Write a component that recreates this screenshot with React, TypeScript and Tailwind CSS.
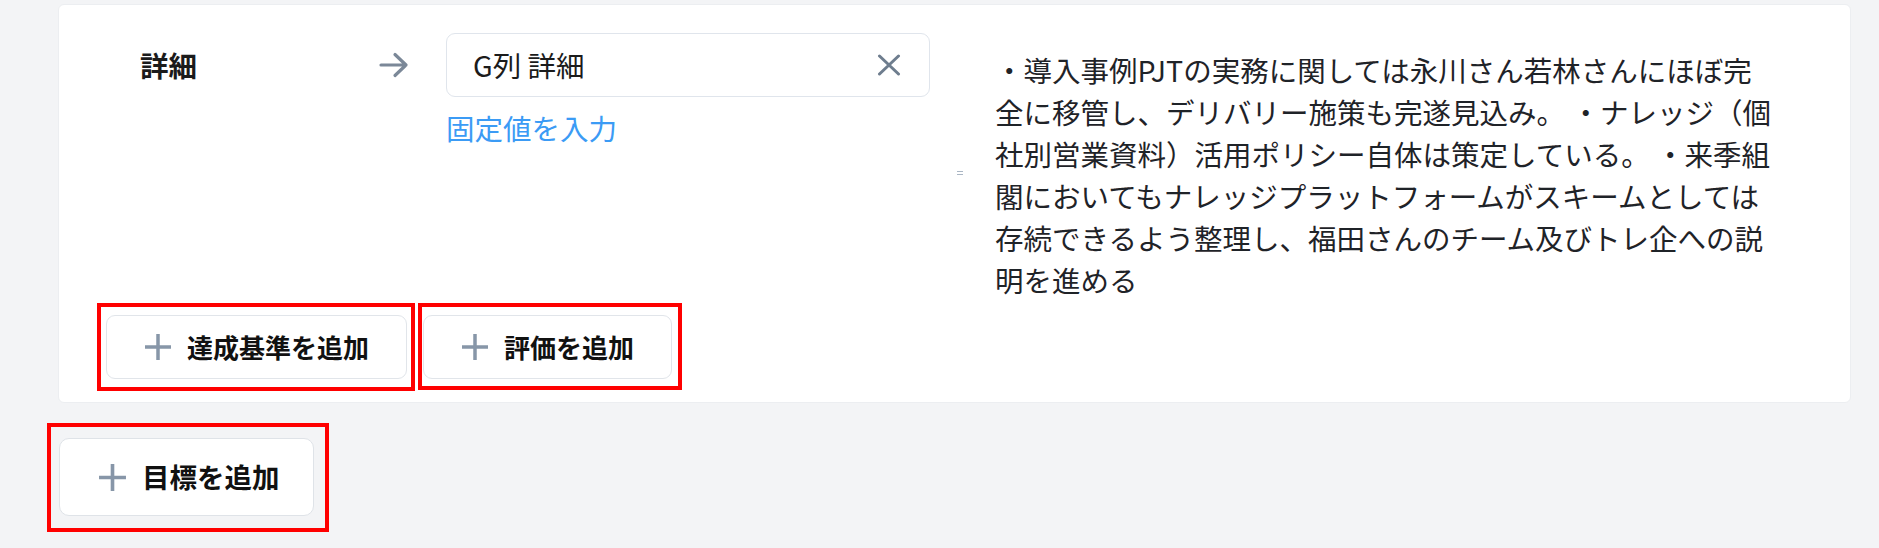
import React from "react";

const font = { fontFamily: '"Noto Sans CJK JP", "Noto Sans", sans-serif' };

// ── icons ─────────────────────────────────────────────────────────
function PlusIcon({ size = 28 }: { size?: number }) {
  return (
    <svg width={size} height={size} viewBox="0 0 28 28" fill="none" className="shrink-0">
      <path d="M14 1v26M1 14h26" stroke="#8796a8" strokeWidth="3.5" />
    </svg>
  );
}

function ArrowIcon() {
  return (
    <svg width="30" height="26" viewBox="0 0 30 26" fill="none">
      <path d="M2 13h25M16 2.5l11 10.5-11 10.5" stroke="#7b8898" strokeWidth="3.2" strokeLinecap="round" strokeLinejoin="round" />
    </svg>
  );
}

function ClearIcon() {
  return (
    <svg width="24" height="22" viewBox="0 0 24 22" fill="none">
      <path d="M2.5 2l19 18M21.5 2l-19 18" stroke="#6e7d8e" strokeWidth="3" strokeLinecap="round" />
    </svg>
  );
}

// ── AddButton ─────────────────────────────────────────────────────
interface AddButtonProps {
  label: string;
  large?: boolean;
}

function AddButton({ label, large = false }: AddButtonProps) {
  if (large) {
    return (
      <button className="flex items-center h-[78px] w-[255px] pl-[38px] gap-[15px] bg-white border border-[#dfe3e8] rounded-[10px] font-bold text-[27.5px] text-[#111] leading-none">
        <PlusIcon size={29} />
        <span>{label}</span>
      </button>
    );
  }
  return (
    <button className="flex items-center h-[64px] px-[37px] gap-[15px] bg-white border border-[#e1e5ea] rounded-[9px] font-bold text-[26px] text-[#111] leading-none">
      <PlusIcon />
      <span>{label}</span>
    </button>
  );
}

// ── Highlight (red annotation box) ────────────────────────────────
function Highlight({ children, className }: { children: React.ReactNode; className?: string }) {
  return <div className={"border-4 border-[#ff0000] " + (className ?? "")}>{children}</div>;
}

export default function App() {
  return (
    <div className="w-[1879px] h-[548px] overflow-hidden bg-[#f3f4f6] pl-[47px] pr-[28px] pt-[4px]" style={font}>
      {/* card */}
      <div className="ml-[11px] h-[399px] bg-white border border-[#eceef1] rounded-[6px] pt-[28px]">
        <div className="flex items-start h-[270px] pl-[81px]">
          <div className="w-[239px] h-[64px] flex items-center font-bold text-[28.5px] text-[#1b1b1b]">詳細</div>
          <div className="h-[64px] flex items-center w-[67px] shrink-0">
            <ArrowIcon />
          </div>
          <div className="w-[484px] shrink-0">
            <div className="h-[64px] flex items-center justify-between pl-[26px] pr-[28px] border border-[#e0e5ec] rounded-[9px] text-[28.5px] text-[#1b1b1b]">
              <span>G列 詳細</span>
              <ClearIcon />
            </div>
            <div className="mt-[10px] text-[28.5px] leading-[42px] text-[#3b9bf5]">固定値を入力</div>
          </div>
          <div className="ml-[27px] mt-[138px] w-[6px] flex flex-col gap-[2px] shrink-0">
            <div className="h-px bg-[#aab6c4]" />
            <div className="h-px bg-[#aab6c4]" />
          </div>
          <p className="ml-[32px] mt-[16px] w-[27.35em] text-[28.5px] leading-[42px] text-[#1f2328]">
            ・導入事例PJTの実務に関しては永川さん若林さんにほぼ完全に移管し、デリバリー施策も完遂見込み。 ・ナレッジ（個社別営業資料）活用ポリシー自体は策定している。 ・来季組閣においてもナレッジプラットフォームがスキームとしては存続できるよう整理し、福田さんのチーム及びトレ企への説明を進める
          </p>
        </div>
        <div className="flex items-start pl-[38px] gap-[3px]">
          <Highlight className="pt-[8px] pb-[8px] pl-[5px] pr-[4px]">
            <AddButton label="達成基準を追加" />
          </Highlight>
          <Highlight className="pt-[8px] pb-[7px] pl-[1px] pr-[6px]">
            <AddButton label="評価を追加" />
          </Highlight>
        </div>
      </div>
      <div className="mt-[20px] flex">
        <Highlight className="pt-[11px] pb-[12px] pl-[8px] pr-[11px]">
          <AddButton label="目標を追加" large />
        </Highlight>
      </div>
    </div>
  );
}
